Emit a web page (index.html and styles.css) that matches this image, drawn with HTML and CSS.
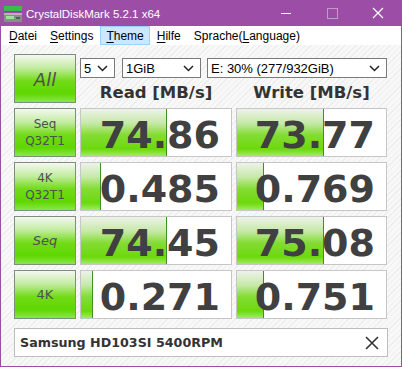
FILE: index.html
```html
<!DOCTYPE html>
<html lang="en">
<head>
    <meta charset="UTF-8">
    <meta name="viewport" content="width=device-width, initial-scale=1.0">
    <title>CrystalDiskMark 5.2.1 x64</title>
    <link rel="stylesheet" href="styles.css">
</head>
<body>
    <div class="window">
        <div class="titlebar">
            <svg class="app-icon" width="18" height="16" viewBox="0 0 18 16">
                <rect x="0" y="0" width="18" height="5" fill="#3dbb4a"/>
                <rect x="0" y="5" width="18" height="1" fill="#2a8a34"/>
                <rect x="0" y="7" width="18" height="9" fill="#8c8c8c"/>
                <rect x="0" y="7" width="18" height="2" fill="#b4b4b4"/>
                <rect x="2" y="10" width="8" height="3" fill="#9be39a"/>
                <rect x="12" y="11" width="4" height="2" fill="#5a5a5a"/>
            </svg>
            <span class="title">CrystalDiskMark 5.2.1 x64</span>
            <div class="win-buttons">
                <svg width="46" height="26" viewBox="0 0 46 26"><line x1="18" y1="13.5" x2="28" y2="13.5" stroke="#fff" stroke-width="1"/></svg>
                <svg width="46" height="26" viewBox="0 0 46 26"><rect x="18.5" y="8.5" width="10" height="10" fill="none" stroke="#c39bcb" stroke-width="1"/></svg>
                <svg width="46" height="26" viewBox="0 0 46 26"><path d="M18 8 L28 18 M28 8 L18 18" stroke="#fff" stroke-width="1.2"/></svg>
            </div>
        </div>
        <div class="menubar">
            <span class="menu-item"><u>D</u>atei</span>
            <span class="menu-item"><u>S</u>ettings</span>
            <span class="menu-item active"><u>T</u>heme</span>
            <span class="menu-item"><u>H</u>ilfe</span>
            <span class="menu-item">Sprache(<u>L</u>anguage)</span>
        </div>
        <div class="content">
            <div class="grid">
                <div class="test-btn all">All</div>
                <div class="controls">
                    <div class="selects">
                        <div class="select count">5<svg class="chev" width="11" height="7" viewBox="0 0 11 7"><polyline points="1,1 5.5,5.5 10,1" fill="none" stroke="#222" stroke-width="1.5"/></svg></div>
                        <div class="select size">1GiB<svg class="chev" width="11" height="7" viewBox="0 0 11 7"><polyline points="1,1 5.5,5.5 10,1" fill="none" stroke="#222" stroke-width="1.5"/></svg></div>
                        <div class="select drive-sel">E: 30% (277/932GiB)<svg class="chev" width="11" height="7" viewBox="0 0 11 7"><polyline points="1,1 5.5,5.5 10,1" fill="none" stroke="#222" stroke-width="1.5"/></svg></div>
                    </div>
                    <div class="headers">
                        <div class="head">Read [MB/s]</div>
                        <div class="head">Write [MB/s]</div>
                    </div>
                </div>

                <div class="test-btn">Seq<br>Q32T1</div>
                <div class="value"><div class="bar" style="width: 85px"></div><span>74.86</span></div>
                <div class="value"><div class="bar" style="width: 86px"></div><span>73.77</span></div>

                <div class="test-btn">4K<br>Q32T1</div>
                <div class="value"><div class="bar" style="width: 19px"></div><span>0.485</span></div>
                <div class="value"><div class="bar" style="width: 26px"></div><span>0.769</span></div>

                <div class="test-btn single slant">Seq</div>
                <div class="value"><div class="bar" style="width: 85px"></div><span>74.45</span></div>
                <div class="value"><div class="bar" style="width: 86px"></div><span>75.08</span></div>

                <div class="test-btn single">4K</div>
                <div class="value"><div class="bar" style="width: 11px"></div><span>0.271</span></div>
                <div class="value"><div class="bar" style="width: 26px"></div><span>0.751</span></div>
            </div>
            <div class="drive">
                <span>Samsung HD103SI 5400RPM</span>
                <svg width="14" height="14" viewBox="0 0 14 14"><path d="M1 1 L13 13 M13 1 L1 13" stroke="#333" stroke-width="1.6"/></svg>
            </div>
        </div>
    </div>
</body>
</html>
```

FILE: styles.css
```css
body {
    margin: 0;
    font-family: "Liberation Sans", Arial, sans-serif;
}
.window {
    width: 402px;
    height: 367px;
    box-sizing: border-box;
    background: #9c4ea7;
    padding: 0 1px 1px 1px;
    display: flex;
    flex-direction: column;
}
.titlebar {
    height: 26px;
    display: flex;
    align-items: center;
    color: white;
}
.app-icon {
    margin: 1px 4px 0 3px;
}
.title {
    font-size: 11.5px;
    margin-top: 1px;
}
.win-buttons {
    margin-left: auto;
    display: flex;
    align-self: flex-start;
}
.win-buttons svg {
    display: block;
}
.menubar {
    height: 19px;
    background: white;
    display: flex;
    align-items: stretch;
    font-size: 12px;
    color: #000;
    padding-left: 2px;
}
.menu-item {
    display: flex;
    align-items: center;
    padding: 0 5px;
    margin-right: 1px;
    border: 1px solid transparent;
    border-bottom: none;
}
.menu-item u {
    text-decoration-thickness: 1px;
    text-underline-offset: 2px;
}
.menu-item.active {
    background: #cce8ff;
    border-color: #99d1ff;
    border-bottom: 1px solid #99d1ff;
}
.content {
    flex: 1;
    padding: 9px 13px 0 13px;
    background: repeating-linear-gradient(135deg, #f8f8f8 0 3px, #ededed 3px 4px);
}
.grid {
    display: grid;
    grid-template-columns: 62px 152px 151px;
    grid-auto-rows: 49px;
    column-gap: 4px;
    row-gap: 5px;
}
.test-btn {
    box-sizing: border-box;
    border: 1px solid #7b8f7b;
    background: linear-gradient(to bottom, #f5f8f2 0%, #c2ec9f 28%, #72db18 55%, #5fd700 82%, #8be64a 100%);
    color: #4f4f4f;
    font-family: "DejaVu Sans", Verdana, sans-serif;
    font-size: 12px;
    line-height: 17px;
    text-align: center;
    display: flex;
    align-items: center;
    justify-content: center;
}
.test-btn.all {
    font-size: 18px;
    font-style: italic;
    padding-top: 2px;
}
.test-btn.single {
    font-size: 13px;
}
.test-btn.slant {
    font-style: italic;
}
.controls {
    grid-column: 2 / 4;
    display: flex;
    flex-direction: column;
}
.selects {
    display: flex;
    margin-top: 4px;
    gap: 6px;
}
.select {
    box-sizing: border-box;
    height: 20px;
    background: white;
    border: 1px solid #7a7a7a;
    font-size: 13px;
    color: #000;
    display: flex;
    align-items: center;
    padding-left: 3px;
    padding-right: 6px;
}
.chev {
    margin-left: auto;
}
.select.count {
    width: 35px;
    margin-right: 1px;
}
.select.size {
    width: 79px;
}
.select.drive-sel {
    width: 180px;
}
.headers {
    display: grid;
    grid-template-columns: 152px 151px;
    column-gap: 4px;
    margin-top: 5px;
}
.head {
    text-align: center;
    font-family: "DejaVu Sans", Verdana, sans-serif;
    font-weight: bold;
    font-size: 16.5px;
    color: #333;
}
.value {
    position: relative;
    box-sizing: border-box;
    border: 1px solid #c6c6c6;
    background: white;
    display: flex;
    align-items: center;
    justify-content: flex-end;
    padding-right: 11px;
}
.bar {
    position: absolute;
    left: 0;
    top: 0;
    bottom: 0;
    background: linear-gradient(to bottom, #eef2ea 0%, #c6e9a8 30%, #84dc34 55%, #6cd90c 85%, #a2ec62 100%);
    border-right: 1px solid #3f8f22;
}
.value span {
    position: relative;
    font-family: "DejaVu Sans", Verdana, sans-serif;
    font-weight: bold;
    font-size: 38px;
    line-height: 1;
    color: #404040;
    padding-top: 4px;
}
.drive {
    margin-top: 9px;
    height: 29px;
    box-sizing: border-box;
    border: 1px solid #bdbdbd;
    background: white;
    display: flex;
    align-items: center;
    justify-content: space-between;
    padding: 0 8px 0 5px;
    font-family: "DejaVu Sans", Verdana, sans-serif;
    font-weight: bold;
    font-size: 12.7px;
    color: #333;
}
```
